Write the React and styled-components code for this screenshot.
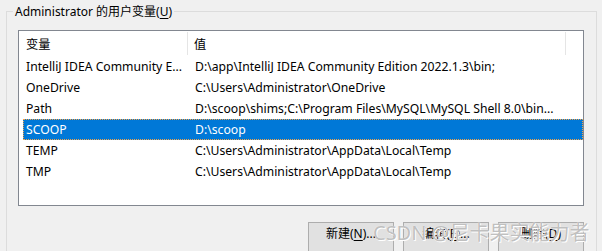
import React from "react";
import styled, { createGlobalStyle } from "styled-components";

const GlobalStyle = createGlobalStyle`
  html, body {
    margin: 0;
    padding: 0;
    background: #f0f0f0;
    overflow: hidden;
  }
  body {
    font-family: "Noto Sans", "Noto Sans CJK SC", sans-serif;
    font-size: 12px;
    color: #000;
  }
`;

const Page = styled.div`
  position: relative;
  width: 602px;
  height: 251px;
  padding: 11px 5px 0 6px;
  box-sizing: border-box;
  overflow: hidden;
`;

const Group = styled.div`
  position: relative;
  height: 260px;
  border: 1px solid #dcdcdc;
  border-bottom: none;
  padding: 18px 12px 0 11px;
  box-sizing: border-box;
`;

const GroupLabel = styled.div`
  position: absolute;
  top: -9px;
  left: 6px;
  padding: 0 2px;
  background: #f0f0f0;
  line-height: 17px;
  white-space: nowrap;
`;

const Key = styled.span`
  text-decoration: underline;
  text-underline-offset: 2px;
`;

const ListBox = styled.div`
  height: 176px;
  border: 1px solid #828790;
  background: #fff;
  box-sizing: border-box;
  padding-left: 4px;
  font-size: 12.2px;
`;

const Header = styled.div`
  display: grid;
  grid-template-columns: 165px 378px;
  height: 25px;
`;

const HeadCell = styled.div`
  display: flex;
  align-items: center;
  margin: 1px 0;
  padding-left: ${(p) => p.$pad}px;
  border-right: 1px solid #e5e5e5;
`;

const Row = styled.div`
  display: grid;
  grid-template-columns: 165px 378px;
  height: 21px;
  align-items: center;
  white-space: nowrap;
  background: ${(p) => (p.$selected ? "#0078d7" : "transparent")};
  color: ${(p) => (p.$selected ? "#fff" : "#000")};
  outline: ${(p) => (p.$selected ? "1px dotted #f3a34a" : "none")};
  outline-offset: -1px;
`;

const Cell = styled.div`
  padding-left: ${(p) => p.$pad}px;
  overflow: hidden;
`;

const Buttons = styled.div`
  display: flex;
  justify-content: flex-end;
  gap: 9px;
  margin-top: 16px;
`;

const Button = styled.button`
  width: 86px;
  height: 30px;
  padding: 0 0 8px;
  display: flex;
  align-items: center;
  justify-content: center;
  background: #e1e1e1;
  border: 1px solid #adadad;
  border-radius: 0;
  font-family: inherit;
  font-size: 12px;
  color: #000;
`;

const Watermark = styled.div`
  position: absolute;
  left: 373px;
  top: 221px;
  font-size: 20px;
  line-height: 24px;
  color: rgba(165, 165, 165, 0.7);
  text-shadow: 0 0 1px #fff, 1px 1px 0 #fff;
  white-space: nowrap;
  pointer-events: none;
`;

const rows = [
  ["IntelliJ IDEA Community E...", "D:\\app\\IntelliJ IDEA Community Edition 2022.1.3\\bin;"],
  ["OneDrive", "C:\\Users\\Administrator\\OneDrive"],
  ["Path", "D:\\scoop\\shims;C:\\Program Files\\MySQL\\MySQL Shell 8.0\\bin..."],
  ["SCOOP", "D:\\scoop"],
  ["TEMP", "C:\\Users\\Administrator\\AppData\\Local\\Temp"],
  ["TMP", "C:\\Users\\Administrator\\AppData\\Local\\Temp"],
];

export default function App() {
  return (
    <Page>
      <GlobalStyle />
      <Group>
        <GroupLabel>
          Administrator 的用户变量(<Key>U</Key>)
        </GroupLabel>
        <ListBox>
          <Header>
            <HeadCell $pad={3}>变量</HeadCell>
            <HeadCell $pad={6}>值</HeadCell>
          </Header>
          {rows.map(([name, value]) => (
            <Row key={name} $selected={name === "SCOOP"}>
              <Cell $pad={3}>{name}</Cell>
              <Cell $pad={7}>{value}</Cell>
            </Row>
          ))}
        </ListBox>
        <Buttons>
          <Button>
            新建(<Key>N</Key>)...
          </Button>
          <Button>
            编辑(<Key>E</Key>)...
          </Button>
          <Button>
            删除(<Key>D</Key>)
          </Button>
        </Buttons>
      </Group>
      <Watermark>CSDN @尼卡果实能力者</Watermark>
    </Page>
  );
}
